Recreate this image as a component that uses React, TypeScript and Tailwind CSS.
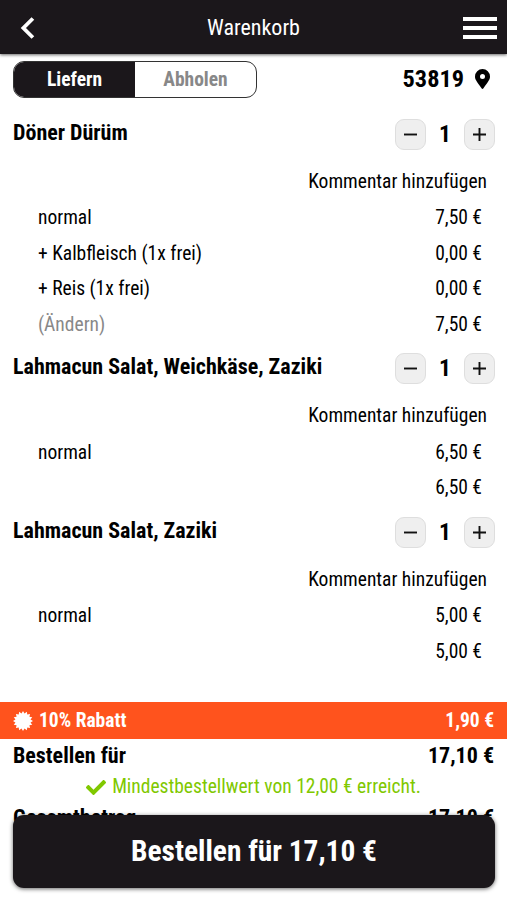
import React from "react";

type Line = { label: string; price: string; muted?: boolean };
type Product = { name: string; lines: Line[] };

const products: Product[] = [
  {
    name: "Döner Dürüm",
    lines: [
      { label: "normal", price: "7,50 €" },
      { label: "+ Kalbfleisch (1x frei)", price: "0,00 €" },
      { label: "+ Reis (1x frei)", price: "0,00 €" },
      { label: "(Ändern)", price: "7,50 €", muted: true },
    ],
  },
  {
    name: "Lahmacun Salat, Weichkäse, Zaziki",
    lines: [
      { label: "normal", price: "6,50 €" },
      { label: "", price: "6,50 €" },
    ],
  },
  {
    name: "Lahmacun Salat, Zaziki",
    lines: [
      { label: "normal", price: "5,00 €" },
      { label: "", price: "5,00 €" },
    ],
  },
];

function StepButton({ plus, label }: { plus?: boolean; label: string }) {
  return (
    <button
      aria-label={label}
      className="flex h-[31px] w-[31px] items-center justify-center rounded-[9px] border border-[#dedede] bg-[#efefef]"
    >
      <svg width="15" height="15" viewBox="0 0 15 15" stroke="#111" strokeWidth="1.9">
        <path d={plus ? "M1 7.5H14M7.5 1V14" : "M1 7.5H14"} />
      </svg>
    </button>
  );
}

function ProductBlock({ name, lines }: Product) {
  return (
    <section className="mb-[3px]">
      <div className="flex h-12 items-center justify-between px-3">
        <h2 className="-mt-[3px] pl-px text-[22px] font-bold">{name}</h2>
        <div className="flex items-center">
          <StepButton label="Weniger" />
          <span className="w-[38px] pt-px text-center text-[23.5px] font-bold">1</span>
          <StepButton plus label="Mehr" />
        </div>
      </div>
      <div className="flex h-[41.5px] items-center justify-end pt-[5px] pr-5 text-[19.5px]">Kommentar hinzufügen</div>
      {lines.map((l, i) => (
        <div key={i} className="flex h-[35.5px] items-center justify-between pt-px pr-[25px] pl-[38px] text-[19.5px]">
          <span className={l.muted ? "text-[#888]" : ""}>{l.label}</span>
          <span>{l.price}</span>
        </div>
      ))}
    </section>
  );
}

const burst = Array.from({ length: 32 }, (_, i) => {
  const r = i % 2 ? 7.7 : 10;
  const a = (i * Math.PI) / 16;
  return `${(10 + r * Math.sin(a)).toFixed(2)},${(10 - r * Math.cos(a)).toFixed(2)}`;
}).join(" ");

export default function App() {
  return (
    <div className="flex h-[900px] w-[507px] flex-col overflow-hidden bg-white font-['Roboto_Condensed','Roboto',sans-serif] leading-none whitespace-nowrap text-black [font-stretch:75%]">
      <header className="z-10 grid h-[54px] shrink-0 grid-cols-3 items-center bg-[#1b171b] px-[10px] text-white shadow-[0_1px_3px_rgba(0,0,0,0.6)]">
        <svg width="26" height="26" viewBox="0 0 26 26" fill="none" stroke="white" strokeWidth="3.8" className="mt-[2px] ml-[5px]">
          <path d="M17.9 3.5L8.4 13L17.9 22.5" />
        </svg>
        <h1 className="pt-[2px] text-center text-[22px]">Warenkorb</h1>
        <svg width="34" height="24" viewBox="0 0 34 24" fill="white" className="mt-[2px] justify-self-end">
          <path d="M0 1h34v4H0zM0 10h34v4H0zM0 19h34v4H0z" />
        </svg>
      </header>

      <div className="flex h-14 shrink-0 items-center justify-between pr-[17px] pb-[6px] pl-[13px]">
        <div className="flex h-[37px] w-[244px] overflow-hidden rounded-[11px] border border-[#333] text-[19.5px] font-bold">
          <button className="w-[121px] bg-[#1b171b] pt-[2px] text-white">Liefern</button>
          <button className="flex-1 pt-[2px] text-[#888]">Abholen</button>
        </div>
        <div className="flex items-center gap-[11px] pt-px text-[24.3px] font-bold">
          <span>53819</span>
          <svg width="15" height="20" viewBox="0 0 384 512">
            <path d="M172 502C27 291 0 270 0 192a192 192 0 1 1 384 0c0 78-27 99-172 310-10 13-30 13-40 0zM192 256a64 64 0 1 0 0-128 64 64 0 0 0 0 128z" />
          </svg>
        </div>
      </div>

      <main className="h-[592px] shrink-0">
        {products.map((p) => (
          <ProductBlock key={p.name} {...p} />
        ))}
      </main>

      <div className="flex h-[36.5px] shrink-0 items-center justify-between bg-[#ff531d] px-[13px] pt-px text-[19.5px] font-bold text-white">
        <span className="flex items-center gap-[6px]">
          <svg width="20" height="20" viewBox="0 0 20 20" fill="white">
            <polygon points={burst} />
          </svg>
          10% Rabatt
        </span>
        <span>1,90 €</span>
      </div>
      <div className="flex h-[34px] shrink-0 items-center justify-between px-[13px] text-[22px] font-bold">
        <span>Bestellen für</span>
        <span>17,10 €</span>
      </div>
      <div className="flex h-[28px] shrink-0 items-center justify-center gap-[6px] pt-px text-[19.5px] text-[#80c800]">
        <svg width="20" height="15" viewBox="0 65 512 382" fill="#80c800">
          <path d="M173.9 439.4L7.5 273c-10-10-10-26.200 0-36.200l36.200-36.200c10-10 26.200-10 36.200 0L192 312.700 432.100 72.600c10-10 26.200-10 36.200 0l36.200 36.200c10 10 10 26.200 0 36.200L210.100 439.400c-10 10-26.200 10-36.200 0z" />
        </svg>
        <span>Mindestbestellwert von 12,00 € erreicht.</span>
      </div>
      <div className="flex h-[34px] shrink-0 items-center justify-between px-[13px] text-[22px] font-bold">
        <span>Gesamtbetrag</span>
        <span>17,10 €</span>
      </div>
      <button className="relative z-10 mr-3 -mt-[20px] ml-[13px] h-[73px] shrink-0 rounded-[11px] bg-[#1b171b] pt-[2px] text-[29.4px] font-bold text-white shadow-[0_1px_4px_rgba(0,0,0,0.6)]">
        Bestellen für 17,10 €
      </button>
    </div>
  );
}
